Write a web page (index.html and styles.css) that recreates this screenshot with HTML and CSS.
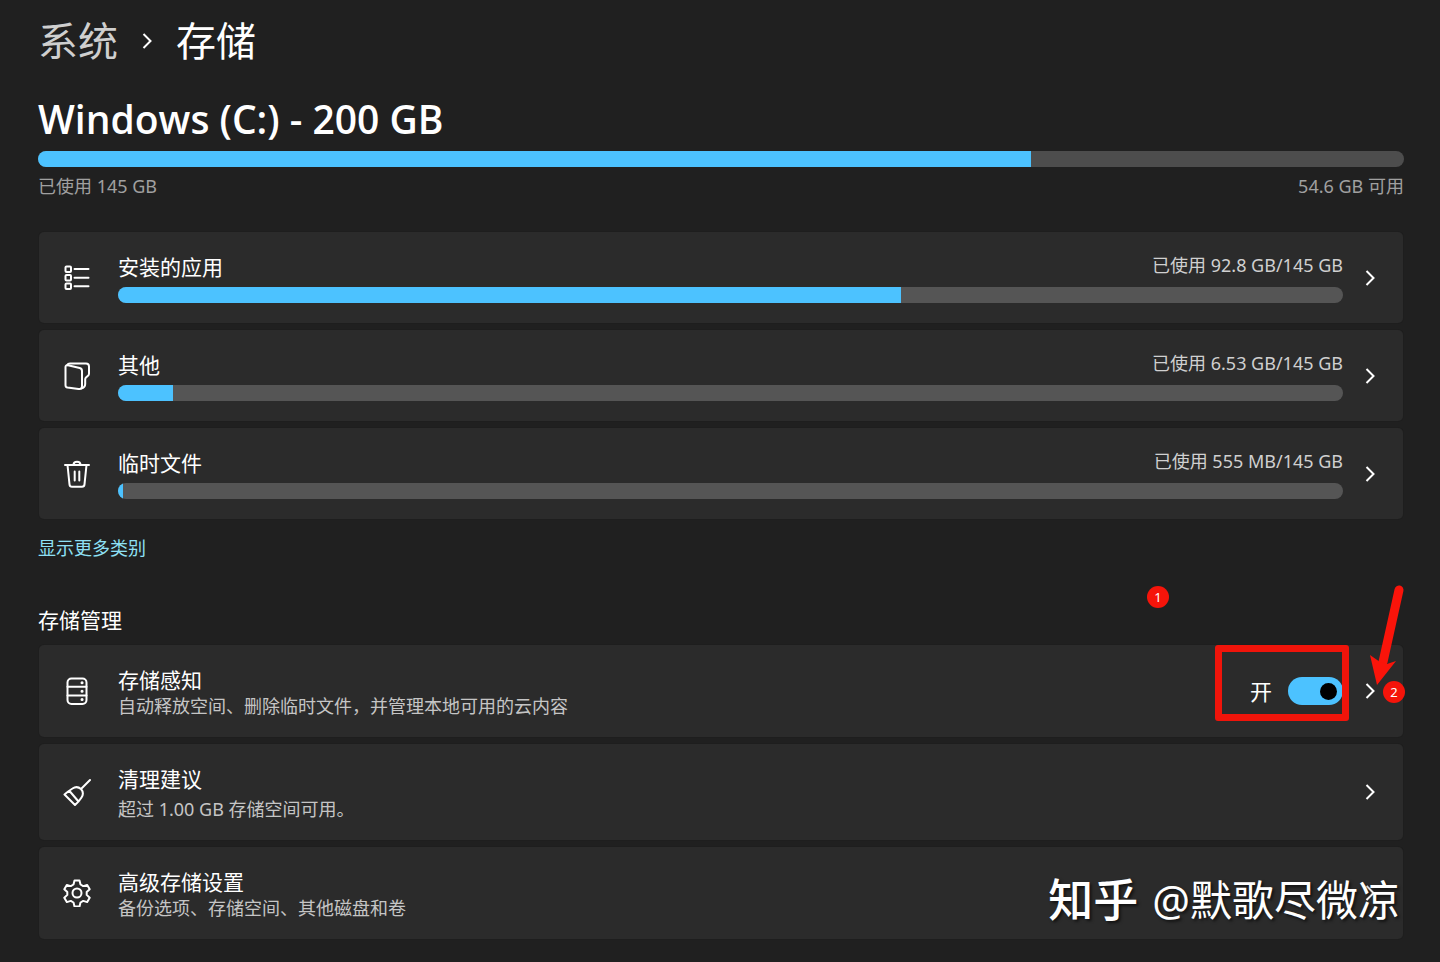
FILE: index.html
```
<!DOCTYPE html>
<html lang="zh-CN">
<head>
  <meta charset="UTF-8">
  <meta name="viewport" content="width=device-width, initial-scale=1.0">
  <title>存储</title>
  <link rel="stylesheet" href="styles.css">
</head>
<body>
<svg class="sprite" aria-hidden="true">
  <symbol id="chevron" viewBox="0 0 14 20">
    <path d="M3.500 3 10.500 10l-7 7"/>
  </symbol>
</svg>

<main class="page">
  <nav class="breadcrumb">
    <a href="#">系统</a>
    <svg class="chevron"><use href="#chevron"/></svg>
    <span>存储</span>
  </nav>

  <h1>Windows (C:) - 200 GB</h1>
  <div class="bar"><div class="bar-fill" style="width: 72.7%"></div></div>
  <div class="bar-labels">
    <span>已使用 145 GB</span>
    <span>54.6 GB 可用</span>
  </div>

  <!-- Usage by category -->
  <div class="cards usage">
    <div class="card">
      <svg class="icon" viewBox="0 0 28 28">
        <rect x="2.500" y="2.500" width="5.500" height="5.500" rx="1"/>
        <rect x="2.500" y="11" width="5.500" height="5.500" rx="1"/>
        <rect x="2.500" y="19.500" width="5.500" height="5.500" rx="1"/>
        <path d="M11.500 5h14M11.500 13.700h14M11.500 22.200h14"/>
      </svg>
      <div class="content">
        <div class="row">
          <h3>安装的应用</h3>
          <span class="used">已使用 92.8 GB/145 GB</span>
        </div>
        <div class="bar"><div class="bar-fill" style="width: 63.9%"></div></div>
      </div>
      <button class="open" aria-label="安装的应用"><svg class="chevron"><use href="#chevron"/></svg></button>
    </div>

    <div class="card">
      <svg class="icon" viewBox="0 0 28 28">
        <path d="M2.500 5v18.300q0 2 2 2.300l11 1.400q3.500.3 3.500-2.700V9q0-2.500-2.300-3L5 3.300Q2.500 2.900 2.500 5"/>
        <path d="M4 3.200q1-1.700 3-1.700h16q3 0 3 3v7q0 1.500-1 2.300l-2 1.700q-.8.800-.8 2v4.500q0 3.500-4 4.500"/>
      </svg>
      <div class="content">
        <div class="row">
          <h3>其他</h3>
          <span class="used">已使用 6.53 GB/145 GB</span>
        </div>
        <div class="bar"><div class="bar-fill" style="width: 4.5%"></div></div>
      </div>
      <button class="open" aria-label="其他"><svg class="chevron"><use href="#chevron"/></svg></button>
    </div>

    <div class="card">
      <svg class="icon" viewBox="0 0 28 28">
        <path d="M2 5h24M10.500 5q0-3.300 3.500-3.300T17.500 5M4.500 5l2 19.300q.2 2.400 2.500 2.400h10q2.300 0 2.500-2.400L23.500 5M11.700 11.500v9M16.300 11.500v9"/>
      </svg>
      <div class="content">
        <div class="row">
          <h3>临时文件</h3>
          <span class="used">已使用 555 MB/145 GB</span>
        </div>
        <div class="bar"><div class="bar-fill" style="width: 0.4%"></div></div>
      </div>
      <button class="open" aria-label="临时文件"><svg class="chevron"><use href="#chevron"/></svg></button>
    </div>
  </div>

  <a class="more" href="#">显示更多类别</a>

  <!-- Storage management -->
  <h2>存储管理</h2>
  <div class="cards manage">
    <div class="card">
      <svg class="icon" viewBox="0 0 28 28">
        <rect x="4.500" y="1.500" width="19" height="25.500" rx="4"/>
        <path d="M4.500 9.800h19M4.500 18.500h19"/>
        <path class="dots" d="M19 5.800h.1M19 14.200h.1M19 22.600h.1"/>
      </svg>
      <div class="content">
        <h3>存储感知</h3>
        <p>自动释放空间、删除临时文件，并管理本地可用的云内容</p>
      </div>
      <div class="switch">
        <label for="sense">开</label>
        <input type="checkbox" id="sense" checked>
      </div>
      <button class="open" aria-label="存储感知"><svg class="chevron"><use href="#chevron"/></svg></button>

      <div class="highlight"></div>
      <span class="marker marker-one">1</span>
      <span class="marker marker-two">2</span>
      <svg class="arrow" viewBox="0 0 40 104">
        <path class="arrow-line" d="M34 6 18 78"/>
        <path class="arrow-head" d="M12 101 5 71l10 7 7 2 9-3z"/>
      </svg>
    </div>

    <div class="card tall">
      <svg class="icon" viewBox="0 0 28 28">
        <path d="M27 2 18.500 10.500M1.500 16.500 12 27q4-3.500 6.500-7.500 3-4.500-.5-8.500-4-3.500-8.500-.5Q5.500 13 1.500 16.500zM6.500 13l9 10.500"/>
      </svg>
      <div class="content">
        <h3>清理建议</h3>
        <p>超过 1.00 GB 存储空间可用。</p>
      </div>
      <button class="open" aria-label="清理建议"><svg class="chevron"><use href="#chevron"/></svg></button>
    </div>

    <div class="card">
      <svg class="icon" viewBox="0 0 28 28">
        <circle cx="14" cy="14" r="4.500"/>
        <path d="M11.500 1.500h5l1 4 2.700 1.600 4-1.200 2.500 4.300-3 2.800v2.900l3 2.900-2.500 4.300-4-1.200-2.700 1.600-1 4h-5l-1-4-2.700-1.600-4 1.200-2.500-4.300 3-2.900V13l-3-2.800 2.500-4.300 4 1.200 2.700-1.600z"/>
      </svg>
      <div class="content">
        <h3>高级存储设置</h3>
        <p>备份选项、存储空间、其他磁盘和卷</p>
      </div>
      <button class="open" aria-label="高级存储设置"><svg class="chevron"><use href="#chevron"/></svg></button>
      <div class="watermark"><b>知乎</b><span>@默歌尽微凉</span></div>
    </div>
  </div>
</main>
</body>
</html>
```
FILE: styles.css
```
* {
    box-sizing: border-box;
}
body {
    margin: 0;
    background-color: #202020;
    color: white;
    font-family: "Noto Sans", "Noto Sans CJK SC", sans-serif;
    font-size: 18px;
    line-height: 26px;
}
h1, h2, h3, p {
    margin: 0;
}
.sprite {
    display: none;
}
.page {
    padding: 11px 36px 22px 38px;
}
.breadcrumb {
    display: flex;
    align-items: center;
    gap: 22px;
    font-size: 40px;
    line-height: 60px;
}
.breadcrumb a {
    color: #cfcfcf;
    text-decoration: none;
}
h1 {
    margin: 18px 0 2px;
    font-family: "Open Sans", "Noto Sans CJK SC", sans-serif;
    font-size: 39px;
    font-weight: 600;
    line-height: 60px;
}
h2 {
    margin: 45px 0 11px;
    font-size: 21px;
    font-weight: 400;
    line-height: 28px;
}
h3 {
    font-size: 21px;
    font-weight: 400;
}
.bar {
    height: 16px;
    border-radius: 8px;
    background-color: #4d4d4d;
    overflow: hidden;
}
.bar-fill {
    height: 100%;
    background-color: #4cc2ff;
}
.bar-labels {
    display: flex;
    justify-content: space-between;
    margin-top: 6px;
    color: #a0a0a0;
}
.cards {
    display: flex;
    flex-direction: column;
    gap: 7px;
    margin: 0 1px;
}
.usage {
    margin-top: 33px;
}
.card {
    position: relative;
    display: flex;
    align-items: center;
    padding: 0 26px 0 24px;
    border-radius: 5px;
    background-color: #2b2b2b;
    box-shadow: 0 0 0 1px #1e1e1e;
}
.icon {
    flex: none;
    width: 28px;
    height: 28px;
    margin-right: 27px;
    fill: none;
    stroke: white;
    stroke-width: 2;
    stroke-linecap: round;
    stroke-linejoin: round;
}
.icon .dots {
    stroke-width: 3;
}
.content {
    flex: 1;
}
.usage .content {
    padding: 21px 0 20px;
}
.usage .bar {
    margin-top: 6px;
    background-color: #555;
}
.row {
    display: flex;
    justify-content: space-between;
    line-height: 28px;
}
.used {
    color: #d0d0d0;
    line-height: 24px;
}
.manage .content {
    padding: 22px 0 18px;
}
.manage .tall p {
    margin-top: 4px;
}
.manage p {
    color: #c5c5c5;
}
.chevron {
    display: block;
    width: 14px;
    height: 20px;
    fill: none;
    stroke: white;
    stroke-width: 2;
}
.open {
    margin-left: 20px;
    padding: 0;
    border: none;
    background: none;
    cursor: pointer;
}
.more {
    display: inline-block;
    margin-top: 16px;
    color: #8ee0f5;
    text-decoration: none;
}
.switch {
    display: flex;
    align-items: center;
    gap: 16px;
    font-size: 22px;
}
.switch input {
    display: flex;
    align-items: center;
    justify-content: flex-end;
    width: 55px;
    height: 28px;
    margin: 0;
    padding-right: 6px;
    border-radius: 14px;
    background-color: #4cc2ff;
    appearance: none;
    cursor: pointer;
}
.switch input::before {
    content: "";
    width: 17px;
    height: 17px;
    border-radius: 50%;
    background-color: black;
}
.switch input:not(:checked) {
    justify-content: flex-start;
    padding-left: 6px;
    background-color: #555;
}

/* Annotations on top of the storage sense card */
.highlight {
    position: absolute;
    top: 0;
    right: 54px;
    width: 134px;
    height: 76px;
    border: 7px solid #f0140a;
    border-radius: 3px;
    pointer-events: none;
}
.marker {
    position: absolute;
    width: 22px;
    height: 22px;
    border-radius: 50%;
    background-color: #f5140a;
    font-size: 13px;
    line-height: 22px;
    text-align: center;
}
.marker-one {
    top: -59px;
    right: 234px;
}
.marker-two {
    top: 36px;
    right: -2px;
}
.arrow {
    position: absolute;
    top: -61px;
    right: -2px;
    width: 40px;
    height: 104px;
    pointer-events: none;
}
.arrow-line {
    fill: none;
    stroke: #fa140a;
    stroke-width: 9;
    stroke-linecap: round;
}
.arrow-head {
    fill: #fa140a;
}
.watermark {
    position: absolute;
    right: 3px;
    bottom: 9px;
    display: flex;
    gap: 14px;
    font-size: 42px;
    line-height: 60px;
    text-shadow: 2px 2px 3px rgba(0, 0, 0, 0.6);
    pointer-events: none;
}
.watermark b {
    font-size: 45px;
    font-weight: 500;
}
```
